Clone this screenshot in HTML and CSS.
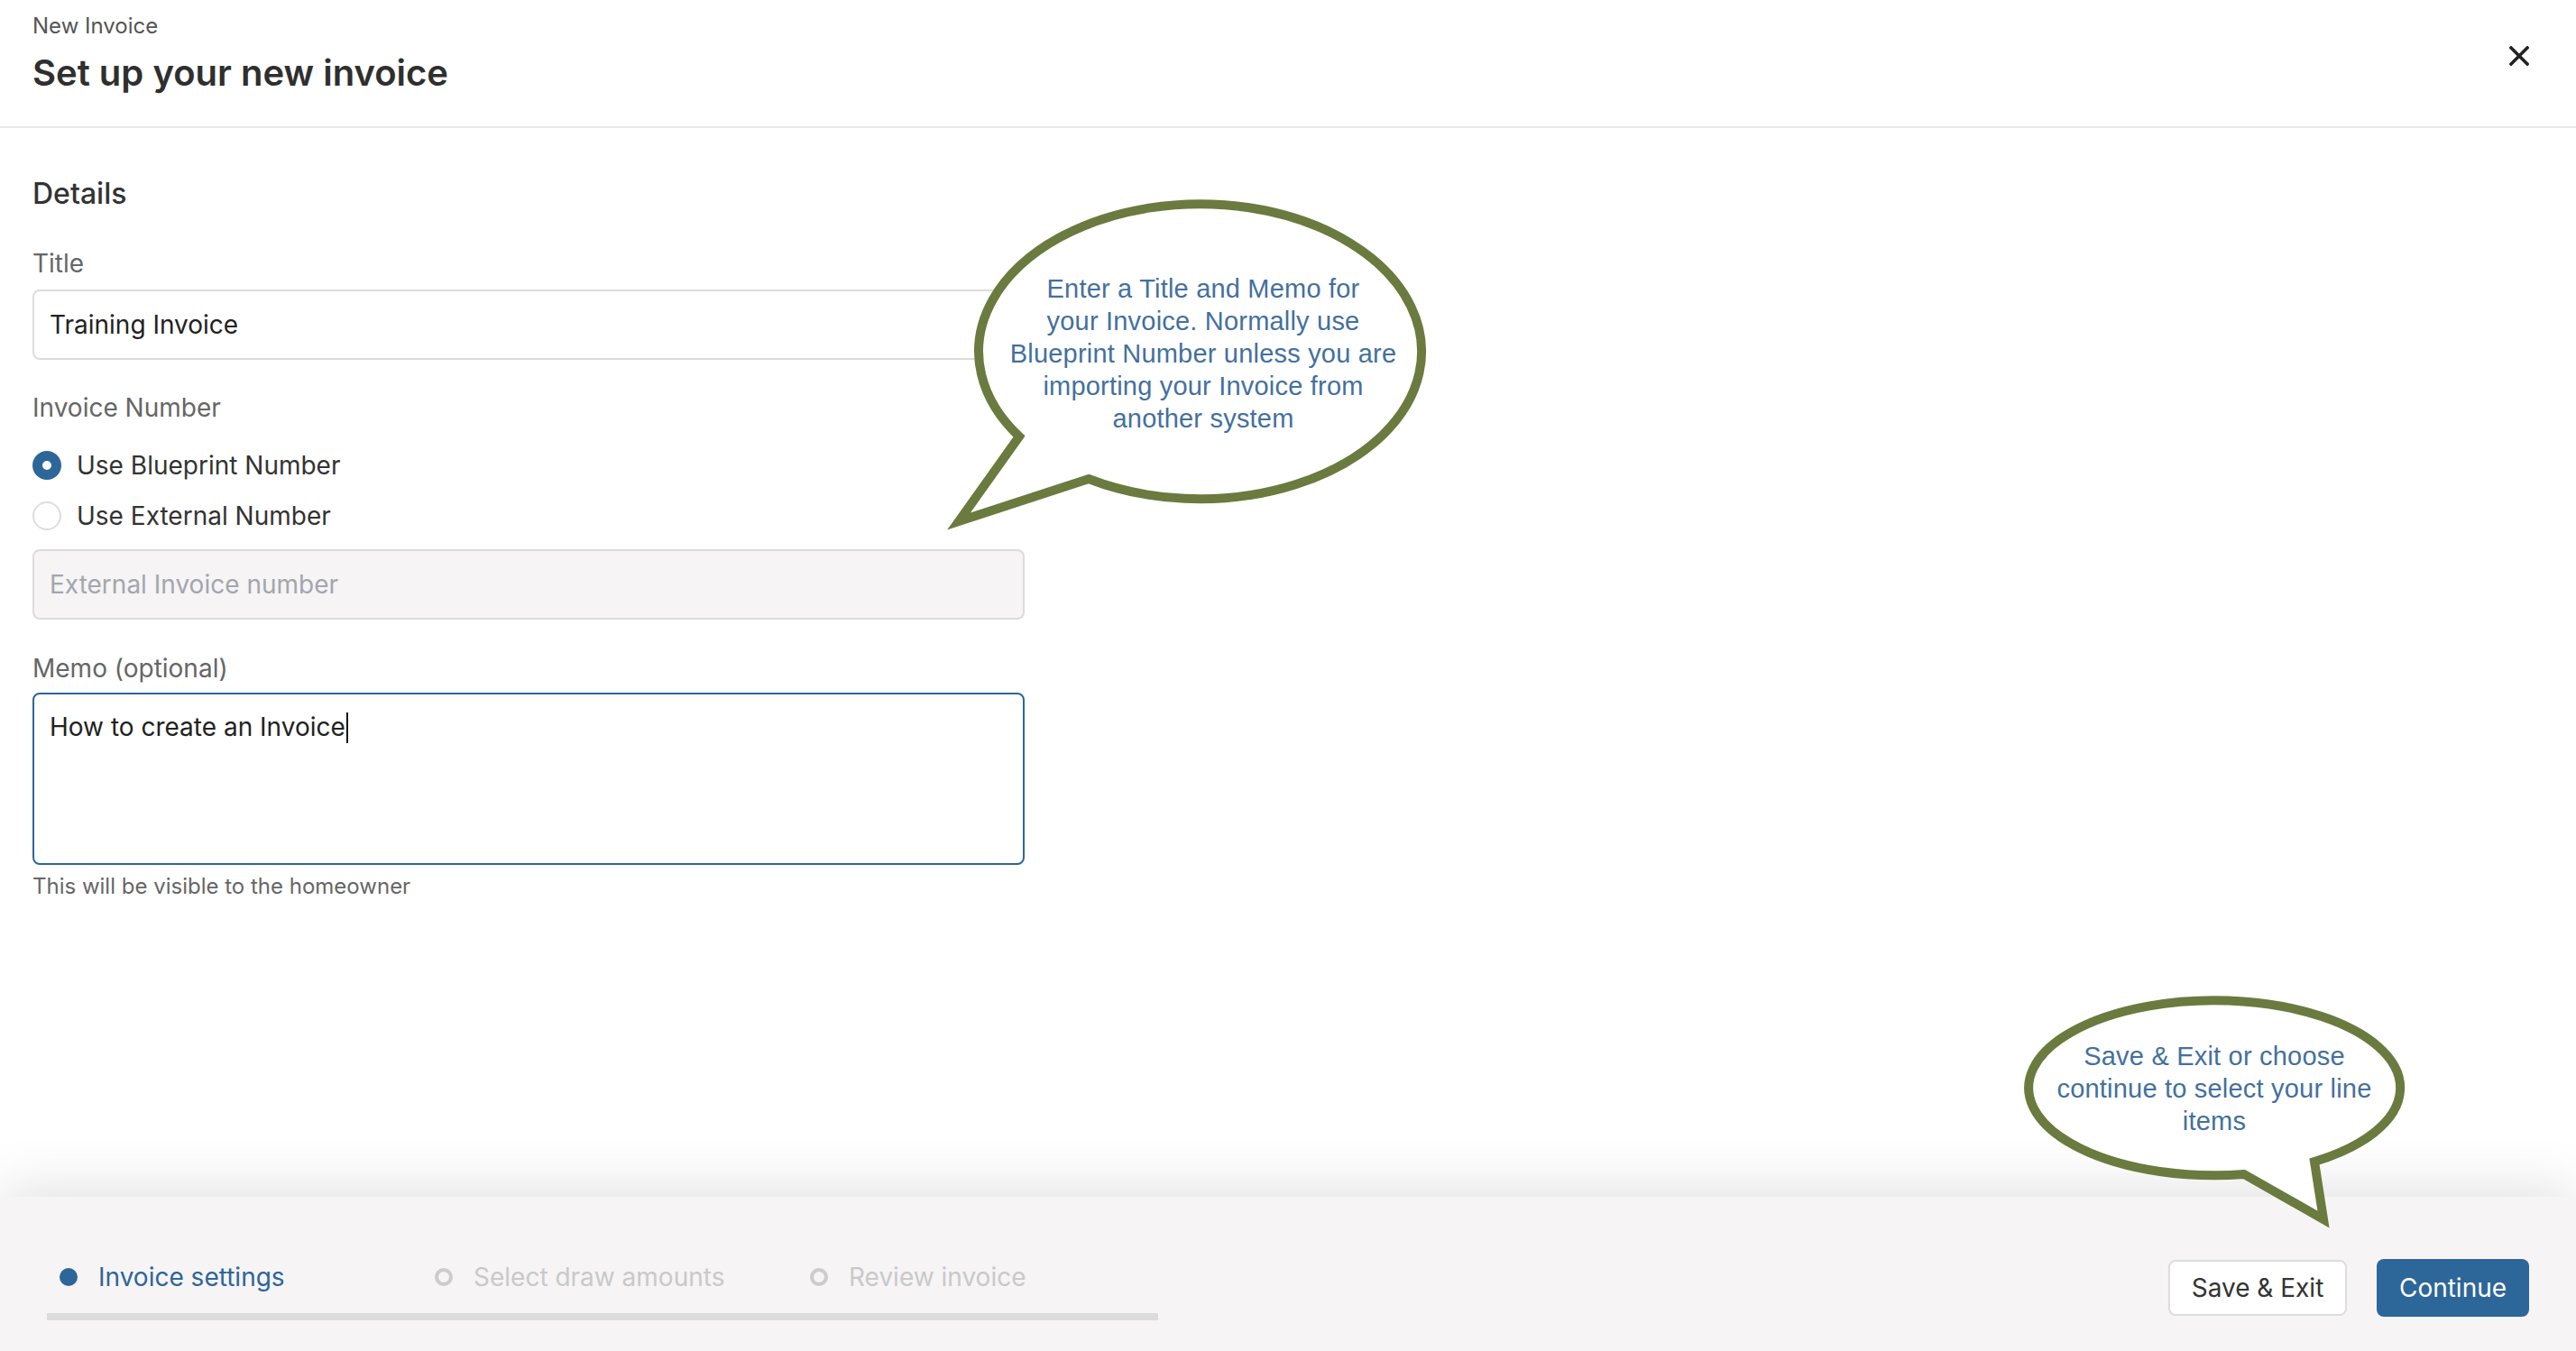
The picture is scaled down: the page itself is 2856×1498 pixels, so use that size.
FILE: index.html
```html
<!DOCTYPE html>
<html lang="en">
<head>
<meta charset="utf-8">
<title>New Invoice</title>
<link rel="stylesheet" href="styles.css">
</head>
<body>
<div class="page">
  <header class="header">
    <div class="header-text">
      <div class="eyebrow">New Invoice</div>
      <h1 class="title">Set up your new invoice</h1>
    </div>
    <button class="close" aria-label="Close">
      <svg width="22" height="22" viewBox="0 0 22 22"><path d="M2 2L20 20M20 2L2 20" stroke="#222" stroke-width="3.6" stroke-linecap="square" fill="none"/></svg>
    </button>
  </header>

  <main class="main">
    <h2 class="section-title">Details</h2>

    <label class="field-label label-title" for="title">Title</label>
    <input class="text-input" id="title" value="Training Invoice">

    <div class="field-label label-number">Invoice Number</div>
    <div class="radio-group">
      <div class="radio-row"><span class="radio checked"></span><span class="radio-text">Use Blueprint Number</span></div>
      <div class="radio-row"><span class="radio"></span><span class="radio-text">Use External Number</span></div>
    </div>
    <input class="text-input disabled" placeholder="External Invoice number">

    <div class="field-label label-memo">Memo (optional)</div>
    <div class="textarea">How to create an Invoice<span class="caret"></span></div>
    <div class="help">This will be visible to the homeowner</div>
  </main>

  <footer class="footer">
    <div class="stepper">
      <div class="steps">
        <div class="step active"><span class="dot"></span><span>Invoice settings</span></div>
        <div class="step"><span class="dot"></span><span>Select draw amounts</span></div>
        <div class="step"><span class="dot"></span><span>Review invoice</span></div>
      </div>
      <div class="bar"></div>
    </div>
    <div class="actions">
      <button class="btn btn-secondary">Save &amp; Exit</button>
      <button class="btn btn-primary">Continue</button>
    </div>
  </footer>

  <svg class="bubble bubble-1" width="570" height="400" viewBox="1040 210 570 400">
    <path d="M1130 484 L1063 578 L1207 531 A245.5 163.5 0 1 0 1130 484 Z" fill="#fff" stroke="#6b7a3e" stroke-width="10" stroke-linejoin="miter" stroke-miterlimit="6"/>
  </svg>
  <div class="bubble-text bubble-text-1">Enter a Title and Memo for<br>your Invoice. Normally use<br>Blueprint Number unless you are<br>importing your Invoice from<br>another system</div>

  <svg class="bubble bubble-2" width="480" height="290" viewBox="2230 1090 480 290">
    <path d="M2488 1302 L2576 1352 L2566 1288 A206 97 0 1 0 2488 1302 Z" fill="#fff" stroke="#6b7a3e" stroke-width="10" stroke-linejoin="miter" stroke-miterlimit="6"/>
  </svg>
  <div class="bubble-text bubble-text-2">Save &amp; Exit or choose<br>continue to select your line<br>items</div>
</div>
</body>
</html>
```

FILE: styles.css
```css
* {
  box-sizing: border-box;
}

html, body {
  margin: 0;
  padding: 0;
  background: #ffffff;
}

body {
  font-family: Inter, "Noto Sans", "Liberation Sans", sans-serif;
  color: #333333;
}

.page {
  position: relative;
  height: 1498px;
  display: flex;
  flex-direction: column;
  overflow: hidden;
}

/* Header */
.header {
  display: flex;
  justify-content: space-between;
  align-items: flex-start;
  padding: 13px 52px 35px 36px;
  border-bottom: 2px solid #e9e9e9;
  flex: 0 0 auto;
}

.eyebrow {
  font-size: 24px;
  line-height: 32px;
  color: #555555;
}

.title {
  margin: 12px 0 0;
  font-size: 40px;
  line-height: 48px;
  font-weight: 600;
  color: #2f2f2f;
}

.close {
  margin-top: 38px;
  padding: 0;
  border: 0;
  background: transparent;
  width: 22px;
  height: 22px;
  display: flex;
}

/* Main form */
.main {
  flex: 1 1 auto;
  padding: 53px 36px 0;
  display: flex;
  flex-direction: column;
  align-items: flex-start;
}

.section-title {
  margin: 0;
  font-size: 32px;
  line-height: 40px;
  font-weight: 500;
  color: #333333;
}

.field-label {
  display: block;
  font-size: 28px;
  line-height: 36px;
  color: #666666;
}

.label-title {
  margin-top: 39px;
}

.label-number {
  margin-top: 35px;
}

.label-memo {
  margin-top: 36px;
}

.text-input {
  display: block;
  width: 1100px;
  height: 78px;
  margin-top: 11px;
  padding: 0 17px;
  border: 2px solid #dcdcdc;
  border-radius: 8px;
  background: #ffffff;
  font: inherit;
  font-size: 28px;
  line-height: 36px;
  color: #222222;
  outline: none;
}

.text-input.disabled {
  margin-top: 17px;
  background: #f6f4f4;
}

.text-input::placeholder {
  color: #a3a6ae;
}

.radio-group {
  margin-top: 26px;
  display: flex;
  flex-direction: column;
  gap: 16px;
}

.radio-row {
  display: flex;
  align-items: center;
  gap: 17px;
  height: 40px;
}

.radio {
  width: 32px;
  height: 32px;
  border-radius: 50%;
  border: 2px solid #dddddd;
  background: #ffffff;
  flex: 0 0 auto;
}

.radio.checked {
  border: 11px solid #2d6699;
}

.radio-text {
  font-size: 28px;
  line-height: 36px;
  color: #333333;
}

.textarea {
  width: 1100px;
  height: 191px;
  margin-top: 9px;
  padding: 18px 17px;
  border: 2px solid #2d6699;
  border-radius: 8px;
  font-size: 28px;
  line-height: 36px;
  color: #222222;
}

.caret {
  display: inline-block;
  width: 2px;
  height: 34px;
  margin-left: 1px;
  vertical-align: -8px;
  background: #111111;
}

.help {
  margin-top: 8px;
  font-size: 24px;
  line-height: 32px;
  color: #666666;
}

/* Footer */
.footer {
  flex: 0 0 171px;
  display: flex;
  justify-content: space-between;
  align-items: flex-start;
  padding: 69px 52px 0;
  background: #f6f4f5;
  box-shadow: 0 -6px 64px rgba(0, 0, 0, 0.13);
  position: relative;
  z-index: 1;
}

.stepper {
  width: 1232px;
  margin-top: 2px;
}

.steps {
  display: grid;
  grid-template-columns: 416px 416px auto;
  padding-left: 14px;
  height: 36px;
}

.step {
  display: flex;
  align-items: center;
  gap: 23px;
  font-size: 28px;
  line-height: 36px;
  color: #c9c9c9;
}

.step .dot {
  width: 20px;
  height: 20px;
  border-radius: 50%;
  border: 4px solid #cccccc;
  flex: 0 0 auto;
}

.step.active {
  color: #2d6699;
}

.step.active .dot {
  border: 0;
  background: #2d6699;
}

.bar {
  margin-top: 22px;
  height: 8px;
  background: #dcdcdc;
}

.actions {
  display: flex;
  align-items: center;
  gap: 33px;
  height: 64px;
}

.btn {
  font: inherit;
  font-size: 28px;
  border-radius: 8px;
  padding: 0;
  cursor: pointer;
}

.btn-secondary {
  width: 198px;
  height: 62px;
  border: 2px solid #dddddd;
  background: #ffffff;
  color: #333333;
}

.btn-primary {
  width: 169px;
  height: 64px;
  border: 0;
  background: #2d6699;
  color: #ffffff;
}

/* Callout bubbles (overlay) */
.bubble {
  position: absolute;
  z-index: 5;
}

.bubble-1 {
  left: 1040px;
  top: 210px;
}

.bubble-2 {
  left: 2230px;
  top: 1090px;
}

.bubble-text {
  position: absolute;
  z-index: 6;
  width: 520px;
  text-align: center;
  font-family: "Liberation Sans", Arial, sans-serif;
  font-size: 29px;
  line-height: 36px;
  letter-spacing: 0.2px;
  color: #44709e;
  white-space: nowrap;
}

.bubble-text-1 {
  left: 1074px;
  top: 302px;
}

.bubble-text-2 {
  left: 2195px;
  top: 1153px;
}
```
